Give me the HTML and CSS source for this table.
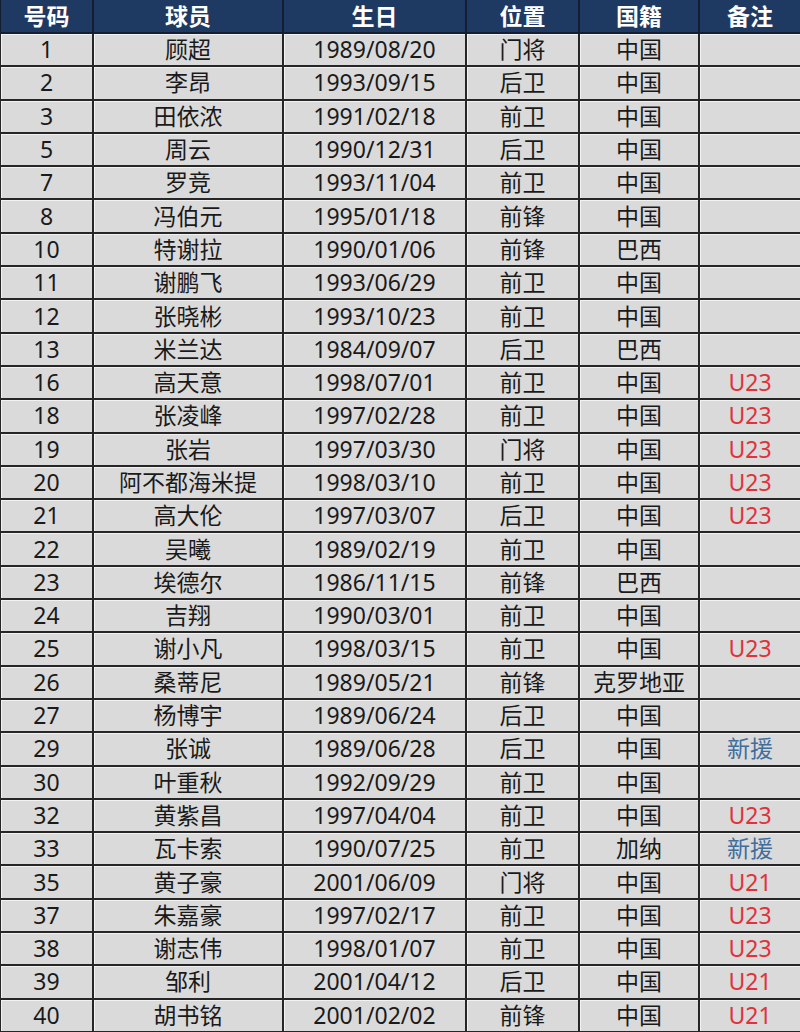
FILE: index.html
```html
<!DOCTYPE html>
<html lang="zh-CN">
<head>
<meta charset="utf-8">
<title>球员名单</title>
<link rel="stylesheet" href="styles.css">
</head>
<body>
<table class="roster">
<colgroup>
<col class="c-no"><col class="c-name"><col class="c-birth"><col class="c-pos"><col class="c-nat"><col class="c-note">
</colgroup>
<thead>
<tr><th>号码</th><th>球员</th><th>生日</th><th>位置</th><th>国籍</th><th>备注</th></tr>
</thead>
<tbody>
<tr><td>1</td><td>顾超</td><td>1989/08/20</td><td>门将</td><td>中国</td><td></td></tr>
<tr><td>2</td><td>李昂</td><td>1993/09/15</td><td>后卫</td><td>中国</td><td></td></tr>
<tr><td>3</td><td>田依浓</td><td>1991/02/18</td><td>前卫</td><td>中国</td><td></td></tr>
<tr><td>5</td><td>周云</td><td>1990/12/31</td><td>后卫</td><td>中国</td><td></td></tr>
<tr><td>7</td><td>罗竞</td><td>1993/11/04</td><td>前卫</td><td>中国</td><td></td></tr>
<tr><td>8</td><td>冯伯元</td><td>1995/01/18</td><td>前锋</td><td>中国</td><td></td></tr>
<tr><td>10</td><td>特谢拉</td><td>1990/01/06</td><td>前锋</td><td>巴西</td><td></td></tr>
<tr><td>11</td><td>谢鹏飞</td><td>1993/06/29</td><td>前卫</td><td>中国</td><td></td></tr>
<tr><td>12</td><td>张晓彬</td><td>1993/10/23</td><td>前卫</td><td>中国</td><td></td></tr>
<tr><td>13</td><td>米兰达</td><td>1984/09/07</td><td>后卫</td><td>巴西</td><td></td></tr>
<tr><td>16</td><td>高天意</td><td>1998/07/01</td><td>前卫</td><td>中国</td><td class="red">U23</td></tr>
<tr><td>18</td><td>张凌峰</td><td>1997/02/28</td><td>前卫</td><td>中国</td><td class="red">U23</td></tr>
<tr><td>19</td><td>张岩</td><td>1997/03/30</td><td>门将</td><td>中国</td><td class="red">U23</td></tr>
<tr><td>20</td><td>阿不都海米提</td><td>1998/03/10</td><td>前卫</td><td>中国</td><td class="red">U23</td></tr>
<tr><td>21</td><td>高大伦</td><td>1997/03/07</td><td>后卫</td><td>中国</td><td class="red">U23</td></tr>
<tr><td>22</td><td>吴曦</td><td>1989/02/19</td><td>前卫</td><td>中国</td><td></td></tr>
<tr><td>23</td><td>埃德尔</td><td>1986/11/15</td><td>前锋</td><td>巴西</td><td></td></tr>
<tr><td>24</td><td>吉翔</td><td>1990/03/01</td><td>前卫</td><td>中国</td><td></td></tr>
<tr><td>25</td><td>谢小凡</td><td>1998/03/15</td><td>前卫</td><td>中国</td><td class="red">U23</td></tr>
<tr><td>26</td><td>桑蒂尼</td><td>1989/05/21</td><td>前锋</td><td>克罗地亚</td><td></td></tr>
<tr><td>27</td><td>杨博宇</td><td>1989/06/24</td><td>后卫</td><td>中国</td><td></td></tr>
<tr><td>29</td><td>张诚</td><td>1989/06/28</td><td>后卫</td><td>中国</td><td class="blue">新援</td></tr>
<tr><td>30</td><td>叶重秋</td><td>1992/09/29</td><td>前卫</td><td>中国</td><td></td></tr>
<tr><td>32</td><td>黄紫昌</td><td>1997/04/04</td><td>前卫</td><td>中国</td><td class="red">U23</td></tr>
<tr><td>33</td><td>瓦卡索</td><td>1990/07/25</td><td>前卫</td><td>加纳</td><td class="blue">新援</td></tr>
<tr><td>35</td><td>黄子豪</td><td>2001/06/09</td><td>门将</td><td>中国</td><td class="red">U21</td></tr>
<tr><td>37</td><td>朱嘉豪</td><td>1997/02/17</td><td>前卫</td><td>中国</td><td class="red">U23</td></tr>
<tr><td>38</td><td>谢志伟</td><td>1998/01/07</td><td>前卫</td><td>中国</td><td class="red">U23</td></tr>
<tr><td>39</td><td>邹利</td><td>2001/04/12</td><td>后卫</td><td>中国</td><td class="red">U21</td></tr>
<tr><td>40</td><td>胡书铭</td><td>2001/02/02</td><td>前锋</td><td>中国</td><td class="red">U21</td></tr>
</tbody>
</table>
</body>
</html>
```

FILE: styles.css
```css
html, body {
  margin: 0;
  padding: 0;
  background: #ffffff;
}

.roster {
  width: 801px;
  height: 1032px;
  margin-left: -1px;
  border-collapse: collapse;
  table-layout: fixed;
  font-family: "Noto Sans", "Noto Sans CJK SC", sans-serif;
  font-size: 23px;
  color: #1a1a1a;
}

.c-no { width: 93px; }
.c-name { width: 190px; }
.c-birth { width: 183px; }
.c-pos { width: 113px; }
.c-nat { width: 120px; }
.c-note { width: 102px; }

.roster th,
.roster td {
  border: 2px solid #262626;
  padding: 0;
  text-align: center;
  vertical-align: middle;
  line-height: 1;
  white-space: nowrap;
}

.roster thead tr {
  height: 33px;
}

.roster tbody tr {
  height: 33.3px;
}

.roster th {
  background: #1f3a62;
  color: #ffffff;
  font-weight: 700;
  border-top: none;
  border-color: #141e30;
}

.roster td {
  background: #dadada;
  box-shadow: inset 1px 1px 0 #f2f2f2;
}

.roster .red {
  color: #e0323c;
}

.roster .blue {
  color: #3f6d9c;
}
```
